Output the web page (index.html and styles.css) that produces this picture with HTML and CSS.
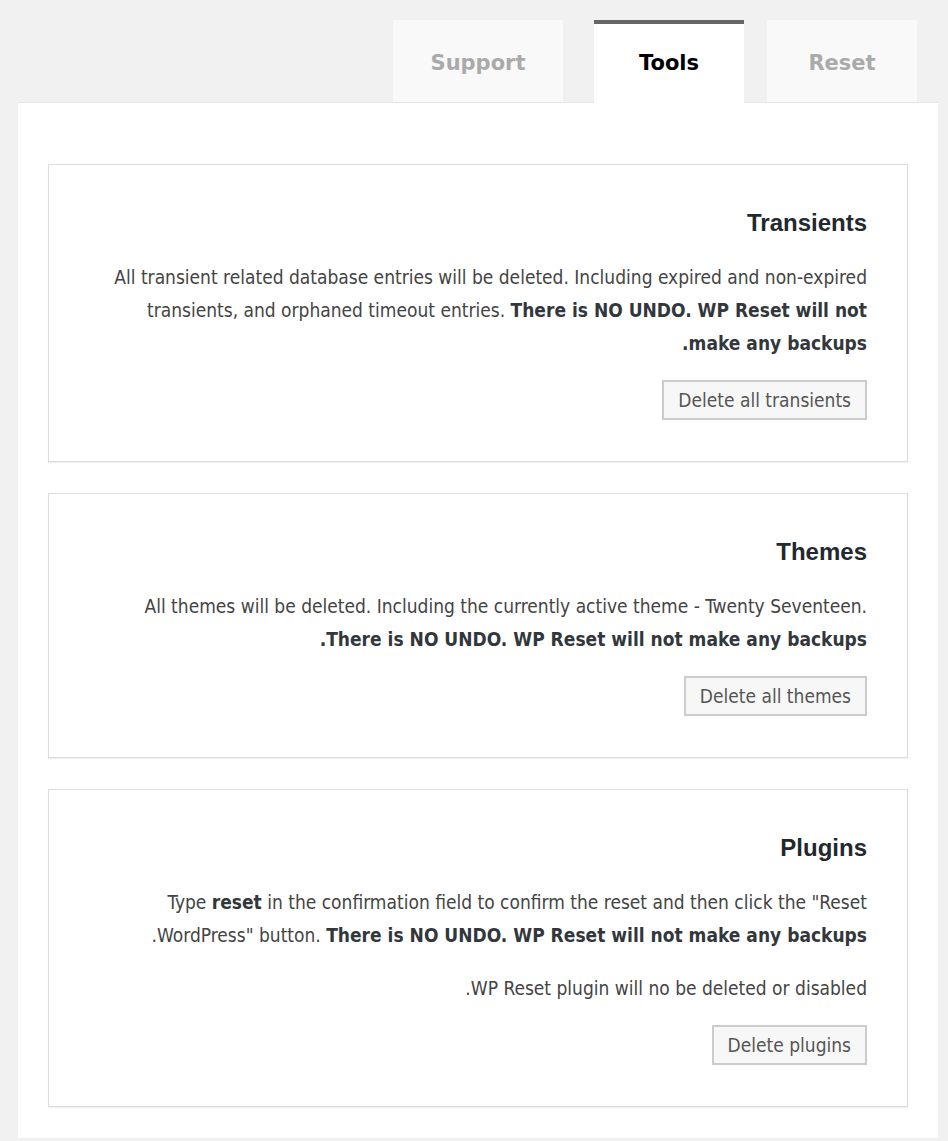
FILE: index.html
```html
<!DOCTYPE html>
<html lang="en" dir="rtl">
<head>
    <meta charset="UTF-8">
    <meta name="viewport" content="width=device-width, initial-scale=1.0">
    <title>WP Reset - Tools</title>
    <link rel="stylesheet" href="styles.css">
</head>
<body>
    <div id="wrap">
        <div class="tabs">
            <div class="tab">Reset</div>
            <div class="tab active">Tools</div>
            <div class="tab wide">Support</div>
        </div>

        <div class="panel">
            <div class="card">
                <h2>Transients</h2>
                <p>All transient related database entries will be deleted. Including expired and non-expired transients, and orphaned timeout entries. <b>There is NO UNDO. WP Reset will not make any backups.</b></p>
                <button>Delete all transients</button>
            </div>

            <div class="card">
                <h2>Themes</h2>
                <p>All themes will be deleted. Including the currently active theme - Twenty Seventeen. <b>There is NO UNDO. WP Reset will not make any backups.</b></p>
                <button>Delete all themes</button>
            </div>

            <div class="card">
                <h2>Plugins</h2>
                <p>Type <b>reset</b> in the confirmation field to confirm the reset and then click the "Reset WordPress" button. <b>There is NO UNDO. WP Reset will not make any backups</b>.</p>
                <p>WP Reset plugin will no be deleted or disabled.</p>
                <button>Delete plugins</button>
            </div>
        </div>
    </div>
</body>
</html>
```

FILE: styles.css
```css
body {
    margin: 0;
    padding: 20px 10px 2px 18px;
    background-color: #f1f1f1;
    font-family: 'DejaVu Sans Condensed', 'DejaVu Sans', sans-serif;
    color: #444;
}

.tabs {
    display: flex;
    gap: 23px;
    padding-right: 21px;
}

.tab {
    width: 150px;
    height: 82px;
    line-height: 86px;
    text-align: center;
    font-family: 'DejaVu Sans', sans-serif;
    font-size: 21px;
    font-weight: bold;
    color: #aaa;
    background-color: #f9f9f9;
}

.tab.wide {
    width: 170px;
    margin-right: 8px;
}

.tab.active {
    box-sizing: border-box;
    height: 83px;
    margin-bottom: -1px;
    border-top: 4px solid #666;
    line-height: 78px;
    color: #000;
    background-color: #fff;
    position: relative;
}

.panel {
    background-color: #fff;
    border-top: 1px solid #e5e5e5;
    padding: 61px 30px 31px;
}

.card {
    border: 1px solid #ddd;
    box-shadow: 0 1px 1px rgba(0, 0, 0, 0.06);
    padding: 40px 40px 41px;
    margin-bottom: 31px;
}

.card:last-child {
    margin-bottom: 0;
}

h2 {
    font-family: 'Liberation Sans', Arial, sans-serif;
    font-size: 24px;
    line-height: 36px;
    color: #23282d;
    margin: 0 0 20px;
}

p {
    font-size: 19px;
    line-height: 33px;
    margin: 0 0 20px;
    padding-left: 15px;
}

b {
    color: #32373c;
}

button {
    height: 40px;
    padding: 0 14px;
    font-family: inherit;
    font-size: 19px;
    color: #555;
    background-color: #f7f7f7;
    border: 2px solid #ccc;
    cursor: pointer;
}
```
